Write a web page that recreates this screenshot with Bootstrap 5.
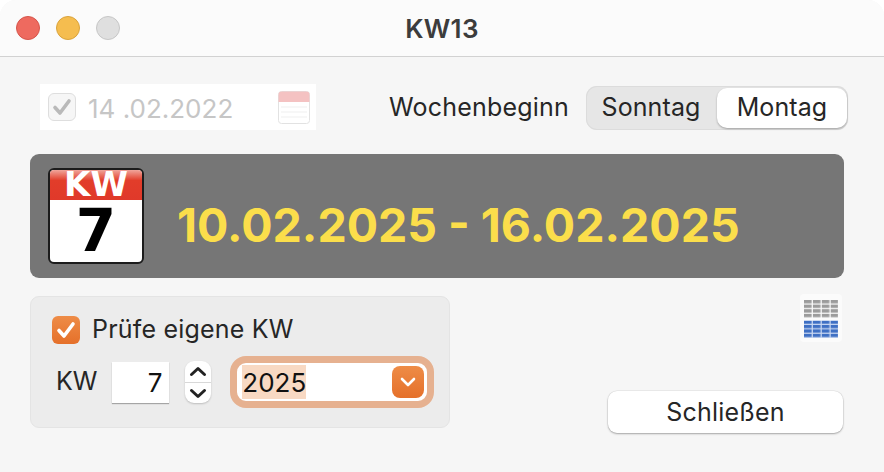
<!DOCTYPE html>
<html lang="de">
<head>
  <meta charset="UTF-8">
  <title>KW13</title>
  <link href="https://cdn.jsdelivr.net/npm/bootstrap@5.3.0/dist/css/bootstrap.min.css" rel="stylesheet">
  <style>
    html, body { height: 100%; }
    body { background: #fff; font-family: Inter, "Liberation Sans", sans-serif; color: #262626; overflow: hidden; }
    .app-window { width: 884px; height: 472px; background: #f6f6f6; border-radius: 16px 16px 0 0; overflow: hidden; }
    .title-bar { height: 57px; background: #fbfbfb; border-bottom: 1px solid #d2d2d2; padding-left: 16px; }
    .light { width: 24px; height: 24px; border-radius: 50%; border: 1px solid; }
    .light-red { background: #ee6a5f; border-color: #d5554b; }
    .light-yellow { background: #f5bd4f; border-color: #d9a33c; }
    .light-grey { background: #dfdfdf; border-color: #c6c6c6; }
    .lights { gap: 16px; width: 104px; }
    .win-title { font-size: 26px; font-weight: 600; color: #3c3c3c; margin-right: 120px; letter-spacing: .3px; }
    .top-row { padding: 27px 36px 0 40px; height: 97px; }
    .date-field { width: 276px; height: 46px; background: #fff; padding: 0 6px 0 8px; color: #c6c6c6; font-size: 26px; }
    .date-text { padding-top: 3px; }
    .date-check { width: 28px; height: 28px; border: 1px solid #dedede; border-radius: 6px; background: #f6f6f6; margin-right: 12px; }
    .week-label { font-size: 25px; margin-right: 17px; padding-top: 1px; letter-spacing: .2px; }
    .segment { width: 262px; height: 44px; background: #e6e6e6; border-radius: 11px; font-size: 25px; box-shadow: inset 0 0 0 1px #dcdcdc; margin-top: 2px; letter-spacing: .1px; }
    .seg-item { width: 130px; }
    .seg-on { width: 130px; height: 40px; background: #fff; border-radius: 10px; box-shadow: 0 1px 2px rgba(0,0,0,.3); margin-right: 1px; }
    .banner { margin: 0 40px 0 30px; height: 124px; background: #767676; border-radius: 9px; padding: 14px 18px; }
    .kw-badge { width: 96px; height: 96px; background: #fff; border: 2px solid #1c1c1c; border-radius: 6px; font-family: "DejaVu Sans", sans-serif; font-weight: 700; color: #000; }
    .kw-head { height: 30px; line-height: 28px; background: linear-gradient(#f0a59b 0, #e23d2a 35%, #e0392a 100%); color: #fff; font-size: 34px; text-align: center; border-radius: 4px 4px 0 0; }
    .kw-num { font-size: 58px; line-height: 62px; text-align: center; }
    .banner-range { color: #fbde4b; font-size: 46.5px; font-weight: 700; margin: 31px 0 0 33px; line-height: 52px; }
    .bottom-row { padding: 18px 41px 0 30px; }
    .own-box { width: 420px; height: 132px; background: #ececec; border: 1px solid #e4e4e4; border-radius: 9px; padding: 14px 15px 0 21px; font-size: 25px; }
    .own-label { letter-spacing: .2px; }
    .own-check { width: 28px; height: 28px; border-radius: 6px; background: linear-gradient(#ee8c47, #e5702a); margin-right: 12px; }
    .kw-input { width: 57px; height: 41px; background: #fff; box-shadow: 0 1px 1px rgba(0,0,0,.3); text-align: right; padding: 0 7px 0 0; font-size: 26px; color: #111; margin: 0 16px 0 15px; line-height: 41px; }
    .kw-text { margin-left: 4px; }
    .stepper { width: 26px; height: 42px; background: #fff; border-radius: 9px; box-shadow: 0 1px 2px rgba(0,0,0,.2); margin-right: 19px; }
    .stepper-half { height: 21px; }
    .stepper-half + .stepper-half { border-top: 1px solid #d8d8d8; }
    .year-wrap { width: 204px; height: 52px; border: 7px solid #e6b190; border-radius: 16px; background: #fff; padding: 0 3px 0 5px; margin-top: -1px; }
    .year-text { background: #f8d9c3; color: #111; font-size: 26px; height: 34px; line-height: 36px; width: 64px; }
    .year-btn { width: 32px; height: 32px; border-radius: 8px; background: linear-gradient(#ee8c47, #e5702a); }
    .side-col { width: 236px; height: 139px; margin-top: -2px; }
    .grid-icon { width: 42px; height: 48px; background: #fbfbfb; border-radius: 4px; margin-right: 1px; padding-top: 2px; }
    .close-btn { width: 235px; height: 42px; background: #fff; border: 0; border-radius: 9px; box-shadow: 0 1px 2px rgba(0,0,0,.3), 0 0 0 .5px rgba(0,0,0,.08); font-size: 25px; line-height: 42px; padding: 0; color: #262626; letter-spacing: .2px; }
  </style>
</head>
<body>
  <div class="app-window">
    <div class="title-bar d-flex align-items-center">
      <div class="lights d-flex">
        <span class="light light-red"></span>
        <span class="light light-yellow"></span>
        <span class="light light-grey"></span>
      </div>
      <div class="win-title flex-grow-1 text-center">KW13</div>
    </div>

    <div class="top-row d-flex justify-content-between align-items-start">
      <div class="date-field d-flex align-items-center">
        <span class="date-check d-flex align-items-center justify-content-center">
          <svg width="20" height="18" viewBox="0 0 20 18"><path d="M3 9.5l5 5.5L17 3" fill="none" stroke="#b9b9b9" stroke-width="3.6" stroke-linecap="round" stroke-linejoin="round"/></svg>
        </span>
        <span class="date-text flex-grow-1">14 .02.2022</span>
        <svg width="32" height="33" viewBox="0 0 32 33">
          <rect x=".5" y=".5" width="31" height="32" rx="3" fill="#fff" stroke="#e2e2e2"/>
          <path d="M.5 11V3.5a3 3 0 0 1 3-3h25a3 3 0 0 1 3 3V11z" fill="#f4c2c2"/>
          <path d="M3 16h26M3 21h26M3 26h26" stroke="#efefef"/>
        </svg>
      </div>
      <div class="d-flex align-items-center">
        <span class="week-label">Wochenbeginn</span>
        <div class="segment d-flex align-items-center justify-content-between">
          <span class="seg-item text-center">Sonntag</span>
          <span class="seg-on d-flex align-items-center justify-content-center">Montag</span>
        </div>
      </div>
    </div>

    <div class="banner d-flex">
      <div class="kw-badge flex-shrink-0">
        <div class="kw-head">KW</div>
        <div class="kw-num">7</div>
      </div>
      <div class="banner-range">10.02.2025 - 16.02.2025</div>
    </div>

    <div class="bottom-row d-flex justify-content-between">
      <div class="own-box">
        <div class="d-flex align-items-center mb-2">
          <span class="own-check d-flex align-items-center justify-content-center">
            <svg width="20" height="18" viewBox="0 0 20 18"><path d="M3 9.5l5 5.5L17 3" fill="none" stroke="#fff" stroke-width="3.6" stroke-linecap="round" stroke-linejoin="round"/></svg>
          </span>
          <span class="own-label">Prüfe eigene KW</span>
        </div>
        <div class="d-flex align-items-center">
          <span class="kw-text">KW</span>
          <span class="kw-input">7</span>
          <div class="stepper flex-shrink-0">
            <div class="stepper-half d-flex align-items-center justify-content-center">
              <svg width="18" height="11" viewBox="0 0 18 11"><path d="M2.5 8.5L9 2.5l6.5 6" fill="none" stroke="#222" stroke-width="3" stroke-linecap="round" stroke-linejoin="round"/></svg>
            </div>
            <div class="stepper-half d-flex align-items-center justify-content-center">
              <svg width="18" height="11" viewBox="0 0 18 11"><path d="M2.5 2.5L9 8.5l6.5-6" fill="none" stroke="#222" stroke-width="3" stroke-linecap="round" stroke-linejoin="round"/></svg>
            </div>
          </div>
          <div class="year-wrap d-flex align-items-center justify-content-between">
            <span class="year-text">2025</span>
            <span class="year-btn d-flex align-items-center justify-content-center">
              <svg width="16" height="10" viewBox="0 0 16 10"><path d="M2 2l6 6 6-6" fill="none" stroke="#fff" stroke-width="2.6" stroke-linecap="round" stroke-linejoin="round"/></svg>
            </span>
          </div>
        </div>
      </div>

      <div class="side-col d-flex flex-column justify-content-between align-items-end">
        <div class="grid-icon d-flex align-items-center justify-content-center">
          <svg width="34" height="38" viewBox="0 0 34 38">
            <defs>
              <pattern id="greyCells" width="8.9" height="4.6" patternUnits="userSpaceOnUse"><rect width="7.6" height="3.4" fill="#9c9c9c"/></pattern>
              <pattern id="blueCells" width="8.9" height="4.4" patternUnits="userSpaceOnUse"><rect width="7.6" height="3.2" fill="#3f70c4"/></pattern>
            </defs>
            <rect width="34" height="18" fill="url(#greyCells)"/>
            <rect y="20.6" width="34" height="17.4" fill="#c9d8f2"/>
            <g transform="translate(0 20.6)"><rect width="34" height="17.4" fill="url(#blueCells)"/></g>
          </svg>
        </div>
        <button type="button" class="close-btn">Schließen</button>
      </div>
    </div>
  </div>
  <script src="https://cdn.jsdelivr.net/npm/bootstrap@5.3.0/dist/js/bootstrap.bundle.min.js"></script>
</body>
</html>
